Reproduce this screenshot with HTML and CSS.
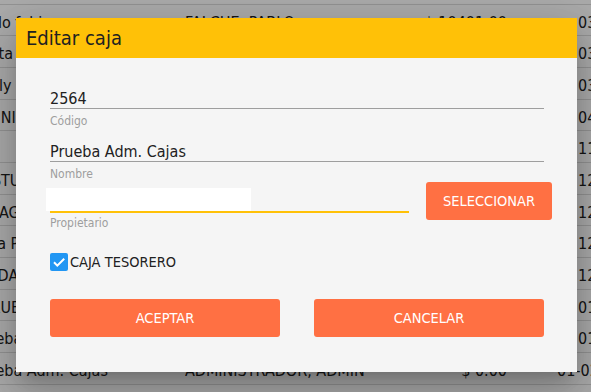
FILE: index.html
```html
<!DOCTYPE html>
<html lang="es">
<head>
  <meta charset="UTF-8" />
  <meta name="viewport" content="width=device-width, initial-scale=1.0"/>
  <title>Cajas | Editar caja</title>
  <link rel="stylesheet" href="styles.css">
</head>
<body>

<div class="screen">
  <div class="list">
    <div class="row"><span class="c-name">Caja central</span><span class="c-owner">PEREZ, JUAN</span><span class="c-amount">$ 1,200.00</span><span class="c-date">02-10-2018</span></div>
    <div class="row"><span class="c-name">Pablo fabi</span><span class="c-owner">FALCHE, PABLO</span><span class="c-amount">$ 10401.00</span><span class="c-date">03-12-2018</span></div>
    <div class="row"><span class="c-name">Venta</span><span class="c-owner">GOMEZ, ANA</span><span class="c-amount">$ 0.00</span><span class="c-date">03-15-2018</span></div>
    <div class="row"><span class="c-name">Emily</span><span class="c-owner">LOPEZ, MARIA</span><span class="c-amount">$ 0.00</span><span class="c-date">03-20-2018</span></div>
    <div class="row"><span class="c-name">TENNIS</span><span class="c-owner">RUIZ, CARLOS</span><span class="c-amount">$ 0.00</span><span class="c-date">04-02-2018</span></div>
    <div class="row"><span class="c-name"></span><span class="c-owner"></span><span class="c-amount"></span><span class="c-date">11-05-2018</span></div>
    <div class="row"><span class="c-name">CASTUPA</span><span class="c-owner">DIAZ, LUIS</span><span class="c-amount">$ 0.00</span><span class="c-date">12-03-2018</span></div>
    <div class="row"><span class="c-name">PASAGE</span><span class="c-owner">SOSA, PEDRO</span><span class="c-amount">$ 0.00</span><span class="c-date">12-07-2018</span></div>
    <div class="row"><span class="c-name">Nota Prueba</span><span class="c-owner">ADMINISTRADOR, ADMIN</span><span class="c-amount">$ 0.00</span><span class="c-date">12-11-2018</span></div>
    <div class="row"><span class="c-name">JORDAN</span><span class="c-owner">MORA, DANIEL</span><span class="c-amount">$ 0.00</span><span class="c-date">12-19-2018</span></div>
    <div class="row"><span class="c-name">APRUEBA</span><span class="c-owner">ADMINISTRADOR, ADMIN</span><span class="c-amount">$ 0.00</span><span class="c-date">01-08-2019</span></div>
    <div class="row"><span class="c-name">Prueba</span><span class="c-owner">ADMINISTRADOR, ADMIN</span><span class="c-amount">$ 0.00</span><span class="c-date">01-22-2019</span></div>
    <div class="row"><span class="c-name">Prueba Adm. Cajas</span><span class="c-owner">ADMINISTRADOR, ADMIN</span><span class="c-amount">$ 0.00</span><span class="c-date c-date-last">01-02-2019</span></div>
    <div class="row"></div>
  </div>

  <div class="overlay"></div>

  <div class="dialog">
    <div class="dialog-head">Editar caja</div>
    <div class="dialog-body">
      <div class="field">
        <div class="value">2564</div>
        <div class="label">Código</div>
      </div>
      <div class="field">
        <div class="value">Prueba Adm. Cajas</div>
        <div class="label">Nombre</div>
      </div>
      <div class="owner-row">
        <div class="field owner">
          <div class="value focused"><span class="fill"></span></div>
          <div class="label">Propietario</div>
        </div>
        <button class="btn btn-select">SELECCIONAR</button>
      </div>
      <label class="check">
        <span class="box">
          <svg width="18" height="18" viewBox="0 0 18 18"><path d="M4 9.3l3.3 3.3L14.2 5.7" fill="none" stroke="#fff" stroke-width="2"/></svg>
        </span>
        CAJA TESORERO
      </label>
      <div class="actions">
        <button class="btn">ACEPTAR</button>
        <button class="btn">CANCELAR</button>
      </div>
    </div>
  </div>
</div>

</body>
</html>
```

FILE: styles.css
```css
* { box-sizing: border-box; }
body {
  margin: 0;
  font-family: "DejaVu Sans Condensed", "DejaVu Sans", sans-serif;
  color: #212121;
  background: #fff;
  overflow: hidden;
}
.screen {
  position: relative;
  width: 591px;
  height: 392px;
  overflow: hidden;
}

/* table behind the dialog */
.list {
  margin-top: -27px;
  margin-left: -28px;
  width: 720px;
}
.row {
  display: flex;
  height: 31.67px;
  padding-top: 8px;
  border-bottom: 1px solid #dcdcdc;
  font-size: 16px;
  line-height: 19px;
  white-space: nowrap;
}
.c-name { width: 213px; overflow: hidden; }
.c-owner { width: 230px; overflow: hidden; }
.c-amount { width: 92px; text-align: right; }
.c-date { margin-left: 71px; }
.c-date-last { margin-left: 50px; }

.overlay {
  position: absolute;
  inset: 0;
  background: rgba(0,0,0,0.33);
}

/* dialog */
.dialog {
  position: absolute;
  left: 16px;
  top: 18px;
  width: 561px;
  height: 354px;
  background: #f5f5f5;
  box-shadow: 0 11px 15px -7px rgba(0,0,0,0.2), 0 24px 38px 3px rgba(0,0,0,0.14), 0 9px 46px 8px rgba(0,0,0,0.12);
}
.dialog-head {
  height: 40px;
  padding-left: 10px;
  background: #ffc107;
  font-size: 20px;
  line-height: 40px;
  color: #212121;
}
.dialog-body {
  padding: 31px 33px 0 34px;
}
.field { margin-bottom: 13px; }
.value {
  font-size: 16px;
  line-height: 19px;
  height: 20px;
  border-bottom: 1px solid #9e9e9e;
}
.label {
  margin-top: 5px;
  font-size: 12px;
  line-height: 15px;
  color: #9e9e9e;
}
.owner-row {
  display: flex;
  align-items: flex-start;
  margin-top: -13px;
}
.owner {
  width: 359px;
  padding-top: 6px;
  margin-bottom: 0;
}
.value.focused {
  height: 25px;
  border-bottom: 2px solid #ffc107;
}
.fill {
  display: block;
  margin-left: -4px;
  width: 205px;
  height: 23px;
  background: #fff;
}
.owner .label { margin-top: 3px; }

.btn {
  height: 38px;
  border: none;
  border-radius: 3px;
  background: #ff7043;
  color: #fff;
  font-family: inherit;
  font-size: 14.5px;
  cursor: pointer;
}
.btn-select {
  width: 126px;
  margin-left: 17px;
  margin-right: -8px;
}

.check {
  display: flex;
  align-items: center;
  margin-top: 22px;
  font-size: 14.5px;
  line-height: 18px;
  color: #212121;
}
.box {
  width: 18px;
  height: 18px;
  margin-right: 2px;
  border-radius: 2px;
  background: #2196f3;
}
.box svg { display: block; }

.actions {
  display: grid;
  grid-template-columns: 1fr 1fr;
  gap: 34px;
  margin-top: 28px;
}
```
